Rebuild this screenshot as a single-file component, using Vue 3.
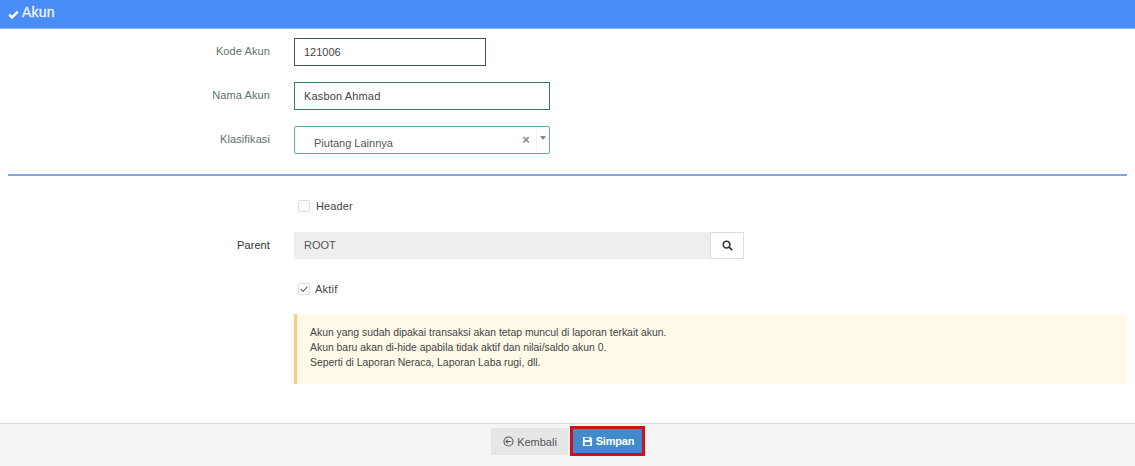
<script setup>
const notes = [
  'Akun yang sudah dipakai transaksi akan tetap muncul di laporan terkait akun.',
  'Akun baru akan di-hide apabila tidak aktif dan nilai/saldo akun 0.',
  'Seperti di Laporan Neraca, Laporan Laba rugi, dll.'
]
</script>

<template>
  <div class="page">
    <header class="bar">
      <svg class="bar-check" viewBox="0 0 12 10" width="11" height="9"><path d="M1.2 5.2 4.4 8.2 10.8 1.8" fill="none" stroke="#fff" stroke-width="2.8"/></svg>
      <span class="bar-title">Akun</span>
    </header>

    <main class="body">
      <section class="top">
        <div class="row">
          <label class="label green">Kode Akun</label>
          <div class="input dark short">121006</div>
        </div>
        <div class="row">
          <label class="label green">Nama Akun</label>
          <div class="input green-border wide">Kasbon Ahmad</div>
        </div>
        <div class="row">
          <label class="label green">Klasifikasi</label>
          <div class="select wide">
            <span class="select-value">Piutang Lainnya</span>
            <span class="select-clear">×</span>
            <span class="select-arrow"></span>
          </div>
        </div>
      </section>

      <hr class="divider" />

      <section class="bottom">
        <div class="check-row first">
          <span class="box"></span>
          <span class="check-text">Header</span>
        </div>
        <div class="row parent">
          <label class="label black">Parent</label>
          <div class="group">
            <div class="readonly">ROOT</div>
            <button class="search" type="button">
              <svg viewBox="0 0 14 14" width="11" height="11"><circle cx="5.8" cy="5.8" r="4.3" fill="none" stroke="#333" stroke-width="2"/><path d="M9 9 13 13" stroke="#333" stroke-width="2.2"/></svg>
            </button>
          </div>
        </div>
        <div class="check-row second">
          <span class="box">
            <svg viewBox="0 0 12 12" width="12" height="12"><path d="M2.8 6.2 5 8.4 9.4 3.6" fill="none" stroke="#666" stroke-width="1.1"/></svg>
          </span>
          <span class="check-text tight">Aktif</span>
        </div>
        <div class="alert">
          <p v-for="n in notes" :key="n">{{ n }}</p>
        </div>
      </section>
    </main>

    <footer class="foot">
      <button class="btn back" type="button">
        <svg viewBox="0 0 12 12" width="11" height="11"><circle cx="6" cy="6" r="5" fill="none" stroke="#555" stroke-width="1.1"/><path d="M9 6H3.4M5.4 3.9 3.3 6l2.1 2.1" fill="none" stroke="#555" stroke-width="1.1"/></svg>
        Kembali
      </button>
      <button class="btn save" type="button">
        <svg viewBox="0 0 12 12" width="11" height="11"><path d="M1 1h8.4L11 2.6V11H1z" fill="#fff"/><rect x="3" y="1.8" width="5" height="2.6" fill="#428bca"/><rect x="3" y="6.6" width="6" height="3.4" fill="#428bca"/></svg>
        Simpan
      </button>
    </footer>
  </div>
</template>

<style scoped>
.page {
  width: 1135px;
  height: 466px;
  display: flex;
  flex-direction: column;
  overflow: hidden;
  background: #fff;
  font-family: "Liberation Sans", Arial, sans-serif;
  font-size: 11px;
  color: #555;
}
.bar {
  height: 29px;
  box-sizing: border-box;
  flex: none;
  display: flex;
  align-items: flex-start;
  gap: 3px;
  padding: 3px 0 0 8px;
  background: #4a8cf7;
  border-bottom: 1px solid #86b0f2;
  color: #eef5ff;
  font-size: 14px;
  line-height: 18px;
}
.bar-title { -webkit-text-stroke: 0.3px #eef5ff; letter-spacing: 0.2px; }
.bar-check { margin-top: 7px; }
.body {
  flex: 1;
  min-height: 0;
}
.top {
  display: flex;
  flex-direction: column;
  gap: 16px;
  padding-top: 9px;
}
.row {
  display: grid;
  grid-template-columns: 270px 1fr;
  column-gap: 24px;
  align-items: center;
}
.label {
  text-align: right;
  line-height: 28px;
  letter-spacing: 0.1px;
}
.label.green { color: #5d7268; position: relative; top: -1px; }
.label.black { color: #333; }
.input {
  height: 28px;
  box-sizing: border-box;
  padding: 0 9px;
  line-height: 26px;
  color: #444;
}
.dark { border: 1px solid #3d5a4f; }
.short { width: 192px; }
.green-border { border: 1px solid #2f7d63; letter-spacing: 0.15px; }
.wide { width: 256px; }
.select {
  height: 28px;
  box-sizing: border-box;
  display: flex;
  align-items: flex-start;
  border: 1px solid #5db39b;
  border-radius: 2px;
}
.select-value {
  flex: 1;
  padding: 7px 0 0 19px;
  line-height: 18px;
}
.select-clear {
  width: 12px;
  margin-right: 4px;
  padding-top: 6px;
  text-align: center;
  color: #888;
  font-size: 13px;
  font-weight: 700;
  line-height: 14px;
}
.select-arrow {
  position: relative;
  width: 13px;
  height: 26px;
}
.select-arrow::before {
  content: "";
  position: absolute;
  top: 0;
  bottom: 0;
  left: 0;
  width: 1px;
  background: #f4f4f4;
}
.select-arrow::after {
  content: "";
  position: absolute;
  top: 9px;
  left: 4px;
  border-left: 3px solid transparent;
  border-right: 3px solid transparent;
  border-top: 4px solid #888;
}
.divider {
  height: 2px;
  box-sizing: border-box;
  margin: 20px 8px 0;
  border: 0;
  background: #7ea6e8;
}
.bottom {
  padding-left: 294px;
}
.bottom .row {
  margin-left: -294px;
}
.check-row {
  display: flex;
  align-items: center;
  padding-left: 4px;
  height: 14px;
  color: #444;
}
.first { margin-top: 23px; }
.second { margin-top: 23px; }
.box {
  width: 12px;
  height: 12px;
  box-sizing: border-box;
  display: flex;
  align-items: center;
  justify-content: center;
  border: 1px solid #ddd;
  border-radius: 2px;
  background: #fff;
}
.box svg { flex: none; }
.check-text { margin-left: 6px; letter-spacing: 0.1px; }
.tight { margin-left: 5px; letter-spacing: 0.2px; }
.parent { margin-top: 18px; }
.group {
  width: 450px;
  display: flex;
  height: 27px;
}
.readonly {
  flex: 1;
  padding-left: 10px;
  background: #eee;
  line-height: 26px;
  color: #555;
}
.search {
  width: 34px;
  box-sizing: border-box;
  display: flex;
  align-items: center;
  justify-content: center;
  padding: 0;
  background: #fff;
  border: 1px solid #ddd;
}
.alert {
  width: 833px;
  height: 70px;
  box-sizing: border-box;
  margin-top: 18px;
  padding: 11px 0 0 13px;
  background: #fef9e9;
  border-left: 3px solid #f3cf85;
  color: #444;
  font-size: 10.4px;
  line-height: 15px;
}
.alert p { margin: 0; }
.foot {
  flex: none;
  height: 43px;
  box-sizing: border-box;
  display: flex;
  justify-content: center;
  align-items: flex-start;
  gap: 2px;
  padding-top: 2px;
  background: #f5f5f5;
  border-top: 1px solid #ddd;
}
.btn {
  box-sizing: border-box;
  display: flex;
  align-items: center;
  justify-content: center;
  gap: 3px;
  padding: 0 0 0 2px;
  border: 0;
  font-family: inherit;
  font-size: 11px;
}
.back {
  width: 77px;
  height: 27px;
  margin-top: 2px;
  background: #e6e6e6;
  color: #555;
  border-radius: 2px;
}
.save {
  width: 75px;
  height: 30px;
  background: #428bca;
  color: #fff;
  border: 3px solid #d40f1d;
  font-weight: 700;
  letter-spacing: -0.2px;
}
</style>
